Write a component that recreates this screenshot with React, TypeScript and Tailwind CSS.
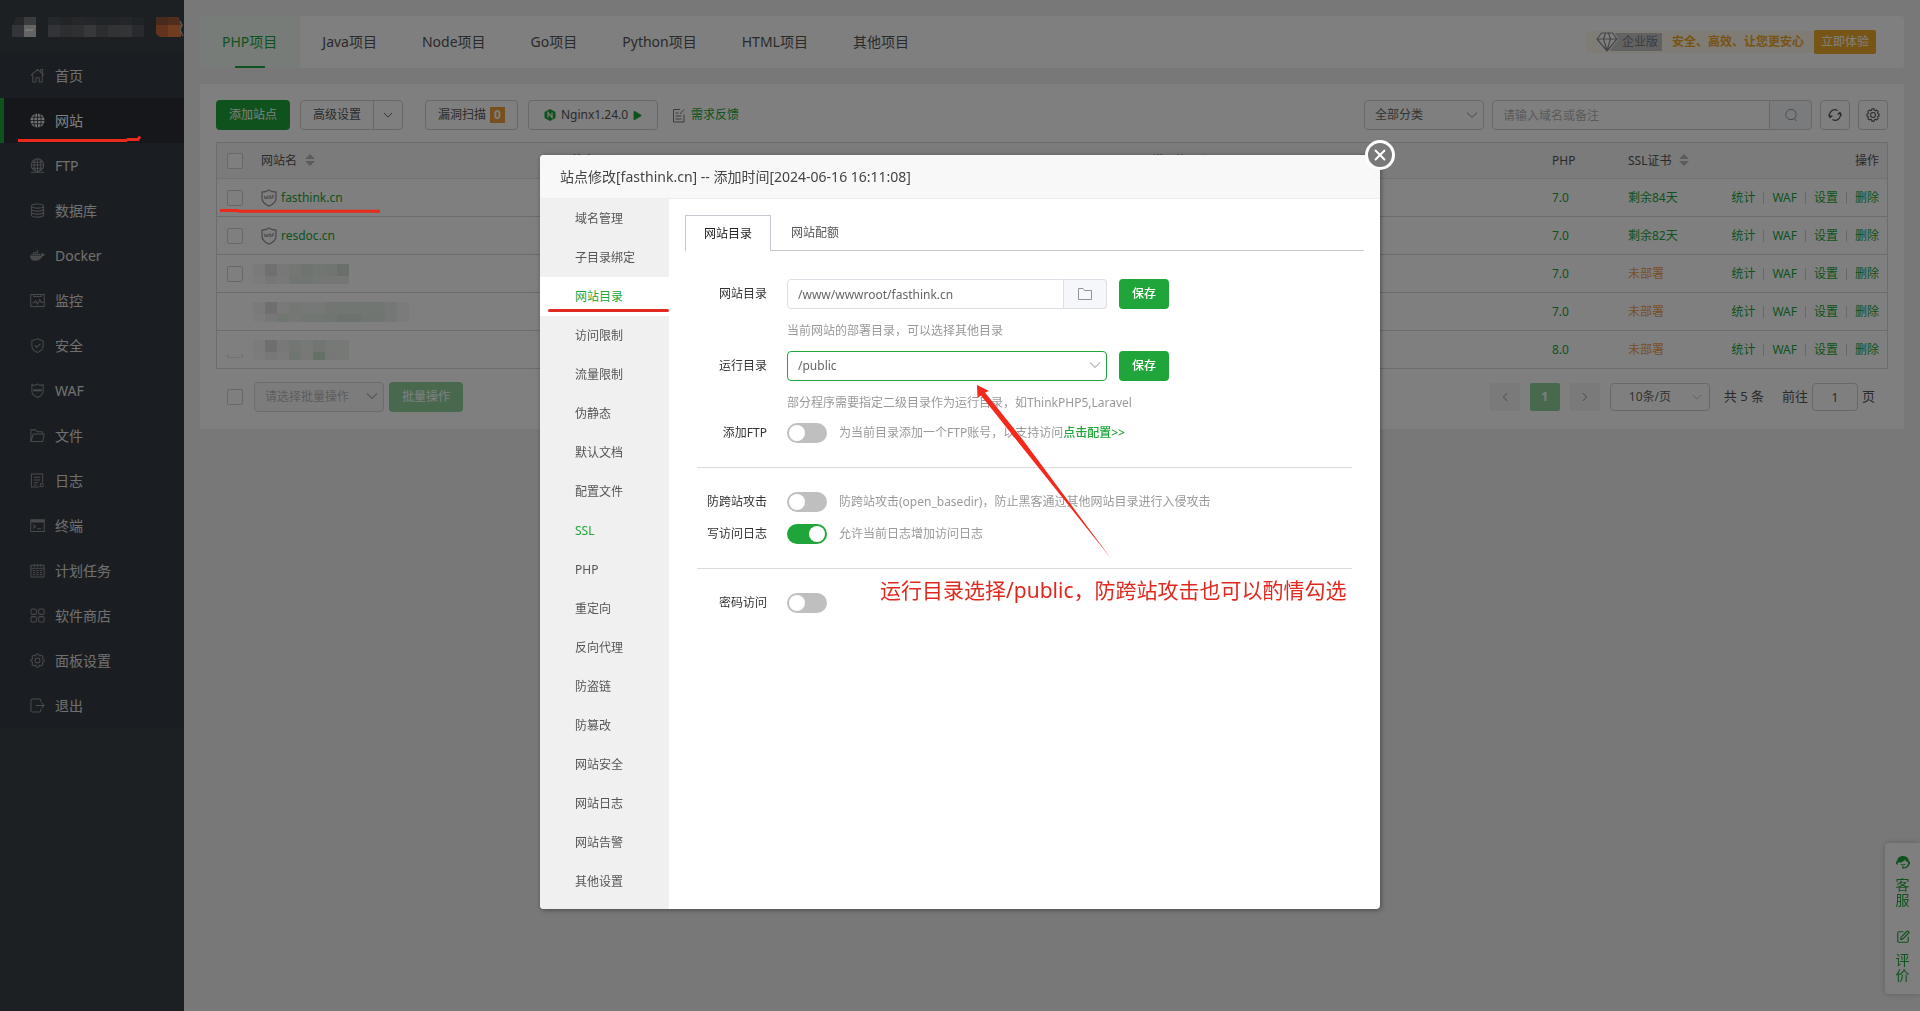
import React from "react";
import { FaDocker, FaPlay } from "react-icons/fa";
import { ChevronLeft, ChevronRight, SquarePen, X } from "lucide-react";

type IconName =
  | "home" | "site" | "ftp" | "database" | "docker" | "monitor" | "shield" | "waf"
  | "folder" | "log" | "terminal" | "calendar" | "store" | "gear" | "exit";

const GEAR =
  "M6.7 1h2.6l.4 1.6 1.2.5 1.4-.8 1.7 1.7-.8 1.4.5 1.2 1.3.4v2l-1.3.4-.5 1.2.8 1.4-1.7 1.7-1.4-.8-1.2.5L9.300 15H6.700l-.4-1.600-1.200-.5-1.400.8-1.700-1.700.8-1.400-.5-1.200L1 9V7l1.300-.4.5-1.200L2 4l1.700-1.700 1.400.8 1.200-.5z";

function MenuIcon({ name }: { name: IconName }) {
  if (name === "docker") return <FaDocker className="h-[15px] w-[15px]" aria-hidden="true" />;
  return (
    <svg viewBox="0 0 16 16" className="h-[15px] w-[15px]" fill="none" stroke="currentColor" strokeWidth="1.1" aria-hidden="true">
      {name === "home" && <path d="M1 8l7-6.500L15 8M11.500 4.500V1.500h2v5M3 7.500V15h3.300v-4.500h3.400V15H13V7.500" />}
      {name === "site" && (
        <>
          <circle cx="8" cy="8" r="7.500" fill="currentColor" stroke="none" />
          <path d="M8 0v16M0 8h16M1.500 4.500h13M1.500 11.500h13M5.500.8C3.600 5 3.600 11 5.500 15.200M10.500.8c1.900 4.200 1.900 10.200 0 14.400" stroke="#2c2f34" strokeWidth=".9" />
        </>
      )}
      {name === "ftp" && <path d="M8 1v13M1 7.500h14M2 4.500h12M2 11h12M1 15.300h14M5.800 1.200c-1.900 4-1.900 8.500 0 12.600M10.200 1.200c1.900 4 1.900 8.500 0 12.600M8 .800a6.700 6.700 0 1 0 0 13.400A6.700 6.700 0 1 0 8 .8z" />}
      {name === "database" && <path d="M1.500 3.200c0-3 13-3 13 0s-13 3-13 0v9.600c0 3 13 3 13 0V3.200M1.500 6.400c0 3 13 3 13 0M1.500 9.600c0 3 13 3 13 0" />}
      {name === "monitor" && <path d="M.8 1.500h14.400v13H.8zM4 1.500v2.300h8V1.500M2.500 10.500h2l1.500-2 2 3.500 2.500-5 1.500 3h2" />}
      {name === "shield" && <path d="M8 .800l6 2.200v5c0 3.500-2.500 6-6 7.400C4.500 14 2 11.500 2 8V3zM5 7.800l2.300 2.300L11 6.300" />}
      {name === "waf" && (
        <>
          <path d="M8 1l2 1.300L14 2v6.500c0 3-2.500 5.500-6 6.900-3.500-1.400-6-3.900-6-6.900V2l4 .3z" />
          <path d="M3.500 7.800h9" strokeWidth="2.200" />
        </>
      )}
      {name === "folder" && <path d="M1 14.500V2h5l1.500 2H13v2.500M1 14.500h12.500L15.200 6.500H3.500L1 14.500z" />}
      {name === "log" && (
        <>
          <path d="M10 15H1.500V1h12v9M4 4.500h7M4 7.500h7M4 10.500h5M4 12.800h3" />
          <circle cx="12.500" cy="13" r="1.700" />
        </>
      )}
      {name === "terminal" && (
        <>
          <path d="M.8 2h14.400v12.500H.8zM3.500 7l2.300 2-2.300 2M7.500 11.500H12" />
          <path d="M.8 3.500h14.400" strokeWidth="2.600" />
        </>
      )}
      {name === "calendar" && <path d="M1 2.500h14v12.500H1zM1 5.500h14M4.500 1v3M8 1v3M11.500 1v3M3 8h2.500M6.700 8h2.600M10.500 8H13M3 10.300h2.500M6.700 10.300h2.600M10.500 10.300H13M3 12.600h2.500M6.700 12.600h2.600M10.500 12.600H13" />}
      {name === "store" && (
        <>
          <rect x="1" y="1" width="5.800" height="5.800" rx="1.500" />
          <rect x="9.200" y="1" width="5.800" height="5.800" rx="1.500" />
          <rect x="1" y="9.200" width="5.800" height="5.800" rx="1.500" />
          <rect x="9.200" y="9.200" width="5.800" height="5.800" rx="1.500" />
        </>
      )}
      {name === "gear" && (
        <>
          <path d={GEAR} strokeLinejoin="round" />
          <circle cx="8" cy="8" r="2.600" />
        </>
      )}
      {name === "exit" && <path d="M11.500 4.500V2L10.500 1H2L1 2v12l1 1h8.500l1-1v-2.500M6 8h9M12.500 5.500L15 8l-2.500 2.500" />}
    </svg>
  );
}

const MENU: { label: string; icon: IconName }[] = [
  { label: "首页", icon: "home" },
  { label: "网站", icon: "site" },
  { label: "FTP", icon: "ftp" },
  { label: "数据库", icon: "database" },
  { label: "Docker", icon: "docker" },
  { label: "监控", icon: "monitor" },
  { label: "安全", icon: "shield" },
  { label: "WAF", icon: "waf" },
  { label: "文件", icon: "folder" },
  { label: "日志", icon: "log" },
  { label: "终端", icon: "terminal" },
  { label: "计划任务", icon: "calendar" },
  { label: "软件商店", icon: "store" },
  { label: "面板设置", icon: "gear" },
  { label: "退出", icon: "exit" },
];

const PROJECT_TABS = ["PHP项目", "Java项目", "Node项目", "Go项目", "Python项目", "HTML项目", "其他项目"];

const ROWS = [
  { name: "fasthink.cn", php: "7.0", ssl: "剩余84天", ok: true },
  { name: "resdoc.cn", php: "7.0", ssl: "剩余82天", ok: true },
  { name: "", php: "7.0", ssl: "未部署", ok: false },
  { name: "", php: "7.0", ssl: "未部署", ok: false },
  { name: "", php: "8.0", ssl: "未部署", ok: false },
];

const SITE_NAV = [
  "域名管理", "子目录绑定", "网站目录", "访问限制", "流量限制", "伪静态", "默认文档", "配置文件", "SSL",
  "PHP", "重定向", "反向代理", "防盗链", "防篡改", "网站安全", "网站日志", "网站告警", "其他设置",
];

type Mosaic = { top: string[]; bottom: string[] };

const MOSAICS: Record<number, Mosaic> = {
  2: {
    top: ["#f4f4f4", "#e0e0e0", "#eff1ef", "#e8eee9", "#e0e8e1", "#e5ece6", "#e0eadf", "#d4dfd6"],
    bottom: ["#f8f8f8", "#eeeeee", "#f0f2f0", "#e4ede6", "#e3ece4", "#e9efea", "#e8efe8", "#e9efea"],
  },
  3: {
    top: ["#f4f4f4", "#dfdfdf", "#f1f3f1", "#e8eee9", "#ebf0ec", "#ebf0ec", "#e4ede5", "#e2ece4", "#e2ece4", "#e4ede5", "#e4ede5", "#e9efea", "#f4f7f4"],
    bottom: ["#f8f8f8", "#eeeeee", "#e0eee3", "#e8eee9", "#e2ece4", "#e3ece4", "#dfeae1", "#d9e5db", "#d9e5db", "#e1eae3", "#e2eae3", "#e9efea", "#f4f7f4"],
  },
  4: {
    top: ["#f6f6f6", "#dfdfdf", "#eff1ef", "#e6efe7", "#eef2ee", "#e4ede5", "#eef2ee", "#eef2ee"],
    bottom: ["#f9f9f9", "#eeeeee", "#f3f5f3", "#dfebe0", "#eef2ee", "#cbe2ce", "#ebf0ec", "#eef2ee"],
  },
};

function MosaicBlock({ data }: { data: Mosaic }) {
  const w = data.top.length * 12;
  return (
    <svg width={w} height="20" viewBox={`0 0 ${w} 20`} className="-ml-2" aria-hidden="true">
      {data.top.map((c, i) => <rect key={i} x={i * 12} y="0" width="12" height="12" fill={c} />)}
      {data.bottom.map((c, i) => <rect key={i} x={i * 12} y="12" width="12" height="8" fill={c} />)}
    </svg>
  );
}

function Chevron({ className }: { className: string }) {
  return (
    <svg viewBox="0 0 12 12" className={className} fill="none" stroke="currentColor" strokeWidth="1.1" aria-hidden="true">
      <path d="M1 3.500l5 5 5-5" />
    </svg>
  );
}

function SortIcon() {
  return (
    <svg viewBox="0 0 10 12" className="ml-2 inline-block h-3 w-[10px] align-[-1px]" fill="#b8b8b8" aria-hidden="true">
      <path d="M5 0l5 5H0zM5 12l5-5H0z" />
    </svg>
  );
}

function WafShield() {
  return (
    <svg viewBox="0 0 16 18" className="h-[18px] w-4" fill="none" stroke="#999" strokeWidth="1.300" aria-hidden="true">
      <path d="M8 1l3 1.500 4 .5v6c0 4-3 6.500-7 8.200C4 15.500 1 13 1 9V3l4-.5z" />
      <path d="M3.200 6.500l1 3.500 1-2.500 1 2.500 .8-3.500M7.800 10l1-3.500 1 3.500M11 10V6.700h2.300M11 8.300h2" strokeWidth=".9" />
    </svg>
  );
}

function Check({ label }: { label: string }) {
  return <input type="checkbox" aria-label={label} className="block h-4 w-4 appearance-none rounded-[2px] border border-[#d0d0d0] bg-white" />;
}

function Sidebar() {
  return (
    <aside className="w-[184px] shrink-0 bg-[#3a4047]">
      <div className="flex h-[53px] items-center overflow-hidden pl-3">
        <svg width="172" height="20" viewBox="0 0 172 20" aria-label="面板" role="img">
          <path d="M4 0h8v8H1z" fill="#4a4f55" />
          <path d="M12 0h12v8H12z" fill="#74787c" />
          <path d="M0 8h12v12H0z" fill="#686b74" />
          <path d="M12 8h12v12H12z" fill="#c8c9cb" />
          <path d="M13 13h8" stroke="#f0f0f0" strokeWidth="2" />
          {["#4a5054", "#454b50", "#4a4f52", "#484d52", "#434a4e", "#454b50", "#484d52", "#41474d"].map((c, i) => (
            <rect key={i} x={36 + i * 12} y="0" width="12" height="8" fill={c} />
          ))}
          {["#65696e", "#595c5e", "#5c6064", "#6c7075", "#585a5c", "#626669", "#65696d", "#50555a"].map((c, i) => (
            <rect key={i} x={36 + i * 12} y="8" width="12" height="12" fill={c} />
          ))}
          <path d="M144 0h12v8h-12z" fill="#8e553c" />
          <path d="M156 0h11l2 8h-13z" fill="#a05a38" />
          <path d="M144 8h12v12h-8l-4-3z" fill="#c4683c" />
          <path d="M156 8h13v12h-13z" fill="#e07a40" />
          <path d="M168 4l2 4-2 5 3 6" fill="none" stroke="#aaa" strokeWidth="1.500" />
        </svg>
      </div>
      <nav aria-label="主菜单">
        {MENU.map((m) => (
          <a
            key={m.label}
            href="#"
            className={
              m.label === "网站"
                ? "flex h-[45px] items-center gap-[10px] border-l-4 border-[#20a53a] bg-[#2c2f34] pl-[26px] text-sm text-white"
                : "flex h-[45px] items-center gap-[10px] bg-[#343a42] pl-[30px] text-sm text-[#e0e0e0]"
            }
          >
            <span className={m.label === "网站" ? "text-[#e0e0e0]" : "text-[#8f9296]"}>
              <MenuIcon name={m.icon} />
            </span>
            {m.label}
          </a>
        ))}
      </nav>
    </aside>
  );
}

function ProjectTabs() {
  return (
    <div className="flex h-[52px] items-center justify-between overflow-hidden rounded bg-white">
      <div className="flex h-full" role="tablist">
        {PROJECT_TABS.map((t, i) => (
          <button
            key={t}
            role="tab"
            aria-selected={i === 0}
            className={
              i === 0
                ? "relative h-full bg-[#f0f9f2] pr-[23px] pl-[22px] text-sm text-[#20a53a] after:absolute after:bottom-0 after:left-[35px] after:h-0.5 after:w-[30px] after:bg-[#20a53a]"
                : "h-full pr-[23px] pl-[22px] text-sm text-[#555]"
            }
          >
            {t}
          </button>
        ))}
      </div>
      <div className="mr-7 flex items-center text-xs">
        <div className="flex h-[22px] items-center rounded-l bg-[#fff6ea] pl-[10px]">
          <svg viewBox="0 0 22 20" className="relative -mr-2 h-5 w-[22px]" fill="none" strokeLinejoin="round" aria-hidden="true">
            <path d="M5.500 1h11L21 7 11 19 1 7z" fill="#fff" stroke="#fff" strokeWidth="3" />
            <path d="M5.500 1h11L21 7 11 19 1 7zM1 7h20M7.500 7L11 18.500 14.500 7M7.500 7L9.500 1M14.500 7l-2-6" stroke="#8a8a8a" strokeWidth="1.200" />
          </svg>
          <span className="bg-[#c4c4c6] pr-1 pl-3 leading-[18px] text-[#777]">企业版</span>
          <span className="px-[10px] font-bold text-[#f0a828]">安全、高效、让您更安心</span>
        </div>
        <button className="h-6 rounded-[2px] bg-[#efab28] px-[7px] text-white">立即体验</button>
      </div>
    </div>
  );
}

function Toolbar() {
  return (
    <div className="flex items-center justify-between text-xs text-[#555]">
      <div className="flex items-center">
        <button className="h-[30px] w-[74px] rounded bg-[#20a53a] text-white">添加站点</button>
        <div className="ml-[10px] flex h-[30px] rounded border border-[#d0d0d0]">
          <button className="w-[72px]">高级设置</button>
          <button aria-label="更多设置" className="flex w-[29px] items-center justify-center border-l border-[#d0d0d0]">
            <Chevron className="h-[10px] w-[10px]" />
          </button>
        </div>
        <button className="ml-[22px] flex h-[30px] items-center gap-1 rounded border border-[#d0d0d0] px-3">
          漏洞扫描
          <span className="w-[15px] bg-[#f0a03c] text-center leading-4 font-bold text-white">0</span>
        </button>
        <button className="ml-[10px] flex h-[30px] w-[130px] items-center justify-center gap-[5px] rounded border border-[#d0d0d0]">
          <svg viewBox="0 0 12 12" className="h-3 w-3" aria-hidden="true">
            <path d="M6 0l5.500 3v6L6 12 .5 9V3z" fill="#20a53a" />
            <path d="M4 8.500v-5l4 5v-5" fill="none" stroke="#fff" strokeWidth="1.200" />
          </svg>
          Nginx1.24.0
          <FaPlay className="h-[9px] w-[9px] text-[#20a53a]" aria-hidden="true" />
        </button>
        <a href="#" className="ml-[14px] flex items-center gap-[5px] text-[#20a53a]">
          <svg viewBox="0 0 14 15" className="h-[15px] w-[14px]" fill="none" stroke="#777" aria-hidden="true">
            <path d="M8 1.500H1.500v12.500h10.500V6.500M3.500 5h3M3.500 8h6M3.500 11h6M8 6l4-4.500" />
          </svg>
          需求反馈
        </a>
      </div>
      <div className="flex gap-2">
        <div className="relative w-[120px]">
          <select aria-label="分类" className="h-[30px] w-full appearance-none rounded border border-[#d0d0d6] bg-white pl-[10px] text-[#666]">
            <option>全部分类</option>
          </select>
          <Chevron className="pointer-events-none absolute top-[9px] right-[6px] h-3 w-3 text-[#bbb]" />
        </div>
        <div className="flex w-80">
          <input aria-label="搜索" placeholder="请输入域名或备注" className="h-[30px] min-w-0 flex-1 rounded-l border border-[#d0d0d6] bg-white pl-[10px] placeholder:text-[#b4b4b4]" />
          <button aria-label="搜索站点" className="flex w-[42px] items-center justify-center rounded-r border border-l-0 border-[#d0d0d6] bg-[#f5f7fa]">
            <svg viewBox="0 0 14 14" className="h-[14px] w-[14px]" fill="none" stroke="#999" aria-hidden="true">
              <circle cx="7" cy="6.500" r="5.200" />
              <path d="M10.500 10.500l2 2.500" />
            </svg>
          </button>
        </div>
        <button aria-label="刷新" className="flex h-[30px] w-[30px] items-center justify-center rounded border border-[#d0d0d6]">
          <svg viewBox="0 0 16 16" className="h-[14px] w-[14px]" fill="none" stroke="#555" strokeWidth="1.400" aria-hidden="true">
            <path d="M2.500 10.500A6 6 0 0 1 11 2.800M13.500 5.500A6 6 0 0 1 5 13.200M.5 7.500l1.800 3.500L5 8.500M15.500 8.500l-1.800-3.500L11 7.500" />
          </svg>
        </button>
        <button aria-label="表格设置" className="flex h-[30px] w-[30px] items-center justify-center rounded border border-[#d0d0d6]">
          <svg viewBox="0 0 16 16" className="h-[14px] w-[14px]" fill="none" stroke="#555" strokeWidth="1.200" aria-hidden="true">
            <path d={GEAR} strokeLinejoin="round" />
            <circle cx="8" cy="8" r="2.800" />
          </svg>
        </button>
      </div>
    </div>
  );
}

function SiteTable() {
  return (
    <table className="mt-3 w-full table-fixed border-separate border-spacing-0 border-x border-t border-[#d8d8d8] text-left text-xs text-[#555]">
      <colgroup>
        <col className="w-[44px]" />
        <col className="w-[310px]" />
        <col />
        <col className="w-[408px]" />
        <col className="w-[76px]" />
        <col className="w-[101px]" />
        <col className="w-[158px]" />
      </colgroup>
      <thead>
        <tr className="h-9 bg-[#f6f6f6] [&>th]:border-b [&>th]:border-[#e4e4e4] [&>th]:p-0 [&>th]:font-normal">
          <th><span className="ml-[10px] block"><Check label="全选站点" /></span></th>
          <th>网站名<SortIcon /></th>
          <th>状态<SortIcon /></th>
          <th>到期时间<SortIcon /></th>
          <th>PHP</th>
          <th>SSL证书<SortIcon /></th>
          <th className="text-right"><span className="mr-2">操作</span></th>
        </tr>
      </thead>
      <tbody>
        {ROWS.map((r, i) => (
          <tr key={i} className="h-[38px] text-[#20a53a] [&>td]:border-b [&>td]:border-[#d8d8d8] [&>td]:p-0">
            <td>
              {i !== 3 && (
                <span className={i === 4 ? "ml-[10px] block [clip-path:inset(13px_0_0_0)]" : "ml-[10px] block"}>
                  <Check label={r.name || `站点${i + 1}`} />
                </span>
              )}
            </td>
            <td>
              {r.name ? (
                <a href="#" className="flex items-center gap-1"><WafShield />{r.name}</a>
              ) : (
                <MosaicBlock data={MOSAICS[i]} />
              )}
            </td>
            <td />
            <td />
            <td>{r.php}</td>
            <td className={r.ok ? "" : "text-[#f0a050]"}>{r.ssl}</td>
            <td>
              <div className="mr-2 flex items-center justify-end">
                {["统计", "WAF", "设置", "删除"].map((a, j) => (
                  <React.Fragment key={a}>
                    {j > 0 && <span className="mx-2 h-3 w-px bg-[#d0d0d0]" />}
                    <a href="#">{a}</a>
                  </React.Fragment>
                ))}
              </div>
            </td>
          </tr>
        ))}
      </tbody>
    </table>
  );
}

function TableFooter() {
  return (
    <div className="mt-[13px] flex items-center justify-between pl-[11px] text-xs text-[#555]">
      <div className="flex items-center">
        <Check label="全选" />
        <div className="relative ml-[11px] w-[130px]">
          <select aria-label="批量操作" className="h-[30px] w-full appearance-none rounded border border-[#d8d8dc] bg-[#f8f8f9] pl-[10px] text-[#bbb]">
            <option>请选择批量操作</option>
          </select>
          <Chevron className="pointer-events-none absolute top-2 right-[6px] h-3 w-3 text-[#b0b0b0]" />
        </div>
        <button className="ml-[5px] h-[30px] w-[74px] rounded bg-[#90d29d] text-white">批量操作</button>
      </div>
      <div className="mr-[13px] flex h-7 items-center">
        <button aria-label="上一页" className="flex h-7 w-[30px] items-center justify-center rounded-[2px] bg-[#f4f4f5] text-[#bbb]"><ChevronLeft size={14} /></button>
        <button className="ml-[10px] h-7 w-[30px] rounded-[2px] bg-[#90d29d] font-bold text-white">1</button>
        <button aria-label="下一页" className="ml-[10px] flex h-7 w-[30px] items-center justify-center rounded-[2px] bg-[#f4f4f5] text-[#bbb]"><ChevronRight size={14} /></button>
        <div className="relative ml-[10px] w-[100px]">
          <select aria-label="每页条数" className="h-7 w-full appearance-none rounded border border-[#d0d0d6] bg-white pl-[18px] text-[#666]">
            <option>10条/页</option>
          </select>
          <Chevron className="pointer-events-none absolute top-[9px] right-2 h-[10px] w-[10px] text-[#bbb]" />
        </div>
        <span className="ml-[14px] text-[13px]">共 5 条</span>
        <label className="ml-[18px] flex items-center gap-1 text-[13px]">
          前往
          <input defaultValue="1" className="h-7 w-[46px] rounded border border-[#d0d0d6] bg-white text-center text-xs" />
          页
        </label>
      </div>
    </div>
  );
}

function Switch({ id, on }: { id: string; on?: boolean }) {
  return (
    <input
      id={id}
      type="checkbox"
      role="switch"
      defaultChecked={on}
      className="relative h-5 w-10 shrink-0 appearance-none rounded-full bg-[#bfbfbf] before:absolute before:top-0.5 before:left-0.5 before:h-4 before:w-4 before:rounded-full before:bg-white checked:bg-[#20a53a] checked:before:left-[22px]"
    />
  );
}

function Field({ id, label, children }: { id: string; label: string; children: React.ReactNode }) {
  return (
    <div className="flex items-center">
      <label htmlFor={id} className="mr-5 w-[70px] text-right text-[#333]">{label}</label>
      {children}
    </div>
  );
}

function SiteDialog() {
  return (
    <section role="dialog" aria-labelledby="site-title" className="relative w-[840px] rounded bg-white text-xs shadow-[1px_1px_5px_rgba(0,0,0,0.4)]">
      <h2 id="site-title" className="flex h-11 items-center rounded-t border-b border-[#eee] bg-[#f8f8f8] pl-5 text-sm text-[#444]">
        站点修改[fasthink.cn] -- 添加时间[2024-06-16 16:11:08]
      </h2>
      <button aria-label="关闭" className="absolute -top-[15px] -right-[15px] flex h-[30px] w-[30px] items-center justify-center rounded-full border-[3px] border-white bg-[#797979] text-white">
        <X size={18} strokeWidth={2.500} className="shrink-0" />
      </button>
      <div className="flex">
        <nav aria-label="站点设置" className="w-[129px] rounded-bl bg-[#f0f0f0] pb-2">
          {SITE_NAV.map((n) => (
            <a
              key={n}
              href="#"
              className={
                n === "网站目录"
                  ? "relative flex h-[39px] items-center bg-white pl-[35px] text-[#20a53a] after:absolute after:right-0 after:bottom-1 after:left-2 after:h-[3px] after:rounded-full after:bg-[#e02a20]"
                  : n === "SSL"
                    ? "flex h-[39px] items-center pl-[35px] text-[#20a53a]"
                    : "flex h-[39px] items-center pl-[35px] text-[#555]"
              }
            >
              {n}
            </a>
          ))}
        </nav>
        <div className="flex-1 px-4 pt-4 text-[#999]">
          <div role="tablist" className="flex h-9 text-[#555]">
            <button role="tab" aria-selected="true" className="w-[86px] border border-b-0 border-[#c8c9d0] text-[#222]">网站目录</button>
            <button role="tab" aria-selected="false" className="border-b border-[#c8c9d0] px-5">网站配额</button>
            <span className="flex-1 border-b border-[#c8c9d0]" />
          </div>
          <div className="px-3 pt-7">
            <Field id="site-dir" label="网站目录">
              <div className="flex w-80">
                <input id="site-dir" defaultValue="/www/wwwroot/fasthink.cn" className="h-[30px] min-w-0 flex-1 rounded-l border border-[#dcdfe6] bg-white pl-[10px] text-[#666]" />
                <button aria-label="选择目录" className="flex w-[43px] items-center justify-center rounded-r border border-l-0 border-[#dcdfe6] bg-[#f5f7fa]">
                  <svg viewBox="0 0 14 12" className="h-3 w-[14px]" fill="none" stroke="#909399" aria-hidden="true">
                    <path d="M.5 11.500V.5h4.500l1.500 2h7v9z" />
                  </svg>
                </button>
              </div>
              <button className="ml-3 h-[30px] w-[50px] rounded bg-[#20a53a] font-medium text-white">保存</button>
            </Field>
            <p className="mt-[13px] ml-[90px] leading-[18px]">当前网站的部署目录，可以选择其他目录</p>
            <div className="mt-[11px]">
              <Field id="run-dir" label="运行目录">
                <div className="relative w-80">
                  <select id="run-dir" className="h-[30px] w-full appearance-none rounded border border-[#20a53a] bg-white pl-[10px] text-[#666]">
                    <option>/public</option>
                  </select>
                  <Chevron className="pointer-events-none absolute top-2 right-[6px] h-3 w-3 text-[#bbb]" />
                </div>
                <button className="ml-3 h-[30px] w-[50px] rounded bg-[#20a53a] font-medium text-white">保存</button>
              </Field>
            </div>
            <p className="mt-[13px] ml-[90px] leading-[18px]">部分程序需要指定二级目录作为运行目录，如ThinkPHP5,Laravel</p>
            <div className="mt-[11px]">
              <Field id="ftp" label="添加FTP">
                <Switch id="ftp" />
                <span className="ml-3">为当前目录添加一个FTP账号，以支持访问<a href="#" className="font-medium text-[#20a53a]">点击配置&gt;&gt;</a></span>
              </Field>
            </div>
            <hr className="mt-6 border-[#dcdcdf]" />
            <div className="mt-6 flex flex-col gap-3">
              <Field id="basedir" label="防跨站攻击">
                <Switch id="basedir" />
                <span className="ml-3">防跨站攻击(open_basedir)，防止黑客通过其他网站目录进行入侵攻击</span>
              </Field>
              <Field id="access-log" label="写访问日志">
                <Switch id="access-log" on />
                <span className="ml-3">允许当前日志增加访问日志</span>
              </Field>
            </div>
            <hr className="mt-6 border-[#dcdcdf]" />
            <div className="mt-6">
              <Field id="password" label="密码访问">
                <Switch id="password" />
              </Field>
            </div>
          </div>
        </div>
      </div>
      <svg viewBox="0 0 136 176" width="136" height="176" className="pointer-events-none absolute top-[229px] left-[436px]" fill="#f5281c" aria-hidden="true">
        <path d="M1 1l12 6-4 1.500L47 56 135 174.500 42 58 5 11.500 1.500 14z" />
      </svg>
      <p className="pointer-events-none absolute top-[420px] left-[340px] text-[21px] leading-[30px] whitespace-nowrap text-[#e0281e]">
        运行目录选择/public，防跨站攻击也可以酌情勾选
      </p>
    </section>
  );
}

export default function App() {
  return (
    <div className="flex min-h-screen bg-[#f1f1f1] font-['Noto_Sans','Noto_Sans_CJK_SC',sans-serif]">
      <Sidebar />
      <main className="min-w-0 flex-1 p-4">
        <ProjectTabs />
        <div className="mt-4 bg-white px-4 pt-4 pb-[17px]">
          <Toolbar />
          <SiteTable />
          <TableFooter />
        </div>
      </main>
      <aside className="fixed right-0 bottom-[17px] flex h-[151px] w-[35px] flex-col items-center justify-between rounded-l bg-white pt-3 pb-3 text-sm leading-[15px] text-[#20a53a] shadow-[0_0_6px_rgba(0,0,0,0.2)]">
        <button className="flex w-[14px] flex-col items-center gap-2">
          <svg viewBox="0 0 16 16" className="h-[14px] w-[14px] shrink-0" fill="currentColor" aria-hidden="true">
            <path d="M8 1C4 1 1.500 3.500 1.300 6.500L0 8v2l2 1.500V8.500C5 9 9.500 7.500 10.500 5c.8 2 2 3 3.500 3.300C13.800 12 11.500 14 9 14.200V13H7v2.500h2c3 0 5.500-1.500 6-4l1-1.500V8l-1.300-1.500C14.500 3.500 12 1 8 1z" />
            <path d="M5 10.500c1.500 2 4.500 2 6 0l-.8-.5c-1.200 1.200-3.200 1.200-4.400 0z" />
          </svg>
          <span className="break-all">客服</span>
        </button>
        <button className="flex w-[14px] flex-col items-center gap-2">
          <SquarePen size={14} className="shrink-0" aria-hidden="true" />
          <span className="break-all">评价</span>
        </button>
      </aside>
      <div className="fixed inset-0 bg-black/50" />
      <div className="pointer-events-none absolute top-[134px] left-[17px]">
        <svg width="127" height="10" viewBox="0 0 127 10" fill="none" stroke="#ea2a1c" strokeWidth="3" aria-hidden="true">
          <path d="M1 6.500h108l2-1h10l2-3" />
        </svg>
      </div>
      <div className="pointer-events-none absolute top-[207px] left-[220px]">
        <svg width="160" height="8" viewBox="0 0 160 8" fill="none" stroke="#ea2a1c" strokeWidth="3" aria-hidden="true">
          <path d="M0 3.500h17l2 .7h141" />
        </svg>
      </div>
      <div className="fixed inset-x-0 top-[155px] flex justify-center">
        <SiteDialog />
      </div>
    </div>
  );
}
